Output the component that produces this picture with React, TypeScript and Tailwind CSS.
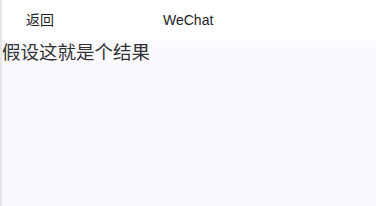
export default function App() {
  return (
    <div
      className="h-[206px] w-[376px] flex flex-col bg-[#faf9fd] border-l-2 border-[#e6e6e6] text-[#333]"
      style={{ fontFamily: '"Liberation Sans", Arial, "Noto Sans CJK SC", sans-serif' }}
    >
      <header className="h-[41px] bg-white flex items-center pl-[24px] text-[14px] text-[#222]">
        <span className="w-[137px]">返回</span>
        <span>WeChat</span>
      </header>
      <main className="pt-[1px]">
        <p className="text-[18.5px] leading-[22px]">假设这就是个结果</p>
      </main>
    </div>
  );
}
